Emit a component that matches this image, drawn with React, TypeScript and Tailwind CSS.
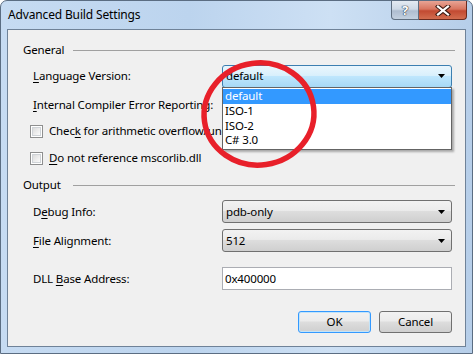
import type { ReactNode } from 'react'

const font = "font-['Segoe_UI','Noto_Sans',sans-serif]"

function Key({ children }: { children: ReactNode }) {
  return <span className="underline underline-offset-[2px] decoration-[1px]">{children}</span>
}

function Arrow() {
  return (
    <svg width="7" height="4" viewBox="0 0 7 4" className="shrink-0">
      <path d="M0 0h7L3.5 4z" fill="#000" />
    </svg>
  )
}

function Combo({ value, focused }: { value: string; focused?: boolean }) {
  const skin = focused
    ? 'border-[#3c7fb1] bg-[linear-gradient(#eaf6fd_0%,#d9f0fc_45%,#bee6fd_50%,#a7d9f5_100%)]'
    : 'border-[#707070] bg-[linear-gradient(#f2f2f2_0%,#ebebeb_45%,#dddddd_50%,#cfcfcf_100%)]'
  return (
    <div className={`flex h-[23px] w-[230px] items-center justify-between rounded-[3px] border pl-[3px] pr-[6px] ${skin}`}>
      <span>{value}</span>
      <Arrow />
    </div>
  )
}

function Header({ label, className }: { label: string; className?: string }) {
  return (
    <div className={`flex h-[16px] items-center pl-[15px] ${className ?? ''}`}>
      <span className="w-[50px]">{label}</span>
      <div className="h-px w-[382px] bg-[#a0a0a0]" />
    </div>
  )
}

function CheckRow({ children, className }: { children: ReactNode; className?: string }) {
  return (
    <div className={`flex h-[14px] items-center pl-[22px] ${className ?? ''}`}>
      <div className="flex h-[13px] w-[13px] items-center justify-center border border-[#8e8f8f] bg-white">
        <div className="h-[9px] w-[9px] border border-[#cfd3d7] bg-[linear-gradient(135deg,#dcdcdc,#fbfbfb)]" />
      </div>
      <span className="ml-[6px] whitespace-nowrap">{children}</span>
    </div>
  )
}

export default function App() {
  return (
    <div className={`relative h-[354px] w-[473px] overflow-hidden bg-white text-[11.5px] tracking-[-0.15px] leading-none text-black ${font}`}>
      <div className="flex h-full w-full flex-col rounded-t-[7px] border border-[#5b6d82] bg-[linear-gradient(90deg,#c6dbf2_0%,#bcd4ee_40%,#cde0f4_70%,#b6cee9_100%)]">
        {/* title bar */}
        <div className="flex h-[28px] items-start">
          <span className="ml-[7px] mt-[8px] text-[12px] text-[#000]">Advanced Build Settings</span>
          <div className="ml-auto mr-[5px] flex h-[19px]">
            <div className="flex w-[28px] items-center justify-center rounded-bl-[4px] border border-t-0 border-[#5e6e80] bg-[linear-gradient(#e3eaf2_0%,#ced9e6_45%,#aebdd0_55%,#c3d1e0_100%)]">
              <span className="text-[13px] font-bold text-white [text-shadow:0_0_1px_#2c3a4b,0_0_1px_#2c3a4b,0_0_1px_#2c3a4b]">?</span>
            </div>
            <div className="flex w-[48px] items-center justify-center rounded-br-[4px] border border-l-0 border-t-0 border-[#6b2a1e] bg-[linear-gradient(#e8a495_0%,#d8755f_45%,#c24a32_55%,#d26d4f_100%)]">
              <svg width="16" height="11" viewBox="0 0 16 11">
                <path d="M3 1.5L13 9.5M13 1.5L3 9.5" stroke="#3b1a12" strokeWidth="4.2" strokeLinecap="square" />
                <path d="M3 1.5L13 9.5M13 1.5L3 9.5" stroke="#fff" strokeWidth="2.2" strokeLinecap="square" />
              </svg>
            </div>
          </div>
        </div>

        {/* client area */}
        <div className="mx-[6px] h-[318px] border border-[#6f8298] bg-[#f0f0f0]">
          <div className="flex flex-col">
            <Header label="General" className="mt-[12px]" />

            <div className="mt-[7px] flex h-[22px] items-center pl-[25px]">
              <span className="w-[189px]"><Key>L</Key>anguage Version:</span>
              <div className="relative">
                <Combo value="default" focused />
                <div className="absolute left-0 top-[22px] z-10 w-[230px] border border-[#646464] bg-white py-px shadow-[2px_2px_2px_rgba(0,0,0,0.3)]">
                  <div className="flex h-[15px] items-center bg-[#3399ff] pl-[2px] text-white">default</div>
                  <div className="flex h-[15px] items-center pl-[2px]">ISO-1</div>
                  <div className="flex h-[14px] items-center pl-[2px]">ISO-2</div>
                  <div className="flex h-[15px] items-center pl-[2px]">C# 3.0</div>
                </div>
              </div>
            </div>

            <div className="mt-[8px] flex h-[20px] items-center pl-[25px]">
              <span className="whitespace-nowrap"><Key>I</Key>nternal Compiler Error Reporting:</span>
            </div>

            <CheckRow className="mt-[9px]">Chec<Key>k</Key> for arithmetic overflow/underflow</CheckRow>
            <CheckRow className="mt-[13px]"><Key>D</Key>o not reference mscorlib.dll</CheckRow>

            <Header label="Output" className="mt-[12px]" />

            <div className="mt-[7px] flex h-[23px] items-center pl-[25px]">
              <span className="w-[189px]">D<Key>e</Key>bug Info:</span>
              <Combo value="pdb-only" />
            </div>
            <div className="mt-[6px] flex h-[23px] items-center pl-[25px]">
              <span className="w-[189px]"><Key>F</Key>ile Alignment:</span>
              <Combo value="512" />
            </div>
            <div className="mt-[15px] flex h-[23px] items-center pl-[25px]">
              <span className="w-[189px]">DLL <Key>B</Key>ase Address:</span>
              <div className="flex h-[23px] w-[230px] items-center border border-[#abadb3] border-t-[#abadb3] bg-white pl-[2px]">0x400000</div>
            </div>

            <div className="mt-[21px] flex h-[22px] justify-end gap-[8px] pr-[13px]">
              <button className="w-[73px] rounded-[3px] border border-[#3399ff] bg-[linear-gradient(#f2f2f2_0%,#ebebeb_45%,#dddddd_50%,#cfcfcf_100%)] shadow-[inset_0_0_0_1px_#c3e4f9]">OK</button>
              <button className="w-[73px] rounded-[3px] border border-[#707070] bg-[linear-gradient(#f2f2f2_0%,#ebebeb_45%,#dddddd_50%,#cfcfcf_100%)]">Cancel</button>
            </div>
          </div>
        </div>
      </div>

      {/* hand-drawn highlight */}
      <svg className="pointer-events-none absolute left-[196px] top-[54px] z-20" width="128" height="120" viewBox="0 0 128 120">
        <ellipse cx="63" cy="60" rx="55" ry="51" fill="none" stroke="#e8202a" strokeWidth="5.5" transform="rotate(-8 63 60)" />
      </svg>
    </div>
  )
}
